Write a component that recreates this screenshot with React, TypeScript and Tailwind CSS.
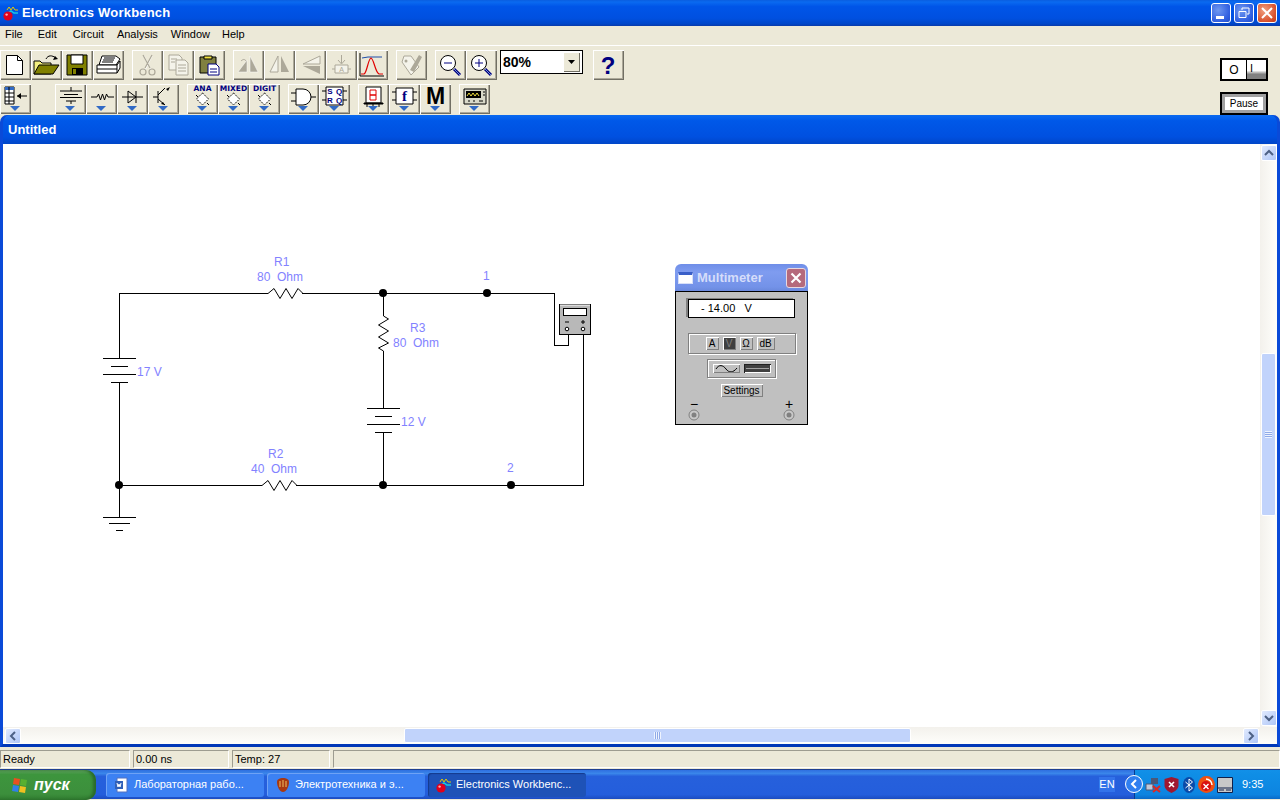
import type { ReactNode } from "react";

const ink = "#000";
const dim = "#aca899";

function Btn({ children, drop }: { children?: ReactNode; drop?: boolean }) {
  return (
    <div className="relative w-[31px] h-[30px] bg-[#ece9d8] shadow-[inset_1px_1px_0_#fff,inset_-1px_-1px_0_#716f64,inset_-2px_-2px_0_#aca899]">
      <svg width="31" height="30" viewBox="0 0 31 30" className="block">
        {children}
        {drop && <path d="M10 22h10l-5 5z" fill="#316ac5" />}
      </svg>
    </div>
  );
}

function Battery() {
  return <path d="M6 9h20M10 13h12M10 16h12M13 20h6M16 3v5M16 21v1" stroke={ink} strokeWidth="1" fill="none" />;
}

function Logo({ size = 16 }: { size?: number }) {
  return (
    <svg width={size} height={size} viewBox="0 0 16 16" className="block shrink-0">
      <path d="M4 5l2-3 2 3 2-3 2 3h3" stroke="#e8c800" fill="none" />
      <path d="M5 8l3-2 3 2h4" stroke="#19c8e0" strokeWidth="1.5" fill="none" />
      <circle cx="5" cy="11" r="4.6" fill="#e0001b" />
      <circle cx="3.6" cy="9.6" r="1.2" fill="#ffb0b0" />
    </svg>
  );
}

function Mag({ plus }: { plus?: boolean }) {
  return (
    <>
      <circle cx="13" cy="13" r="7.5" fill="#fff" stroke={ink} />
      <path d="M9 13h8" stroke="#000080" />
      {plus && <path d="M13 9v8" stroke="#000080" />}
      <path d="M19 19l6 6" stroke="#000080" strokeWidth="3" />
      <path d="M19 19l6 6" stroke="#6f8fd8" strokeWidth="1" />
    </>
  );
}

function Chip({ label }: { label: string }) {
  return (
    <>
      <text x="15.5" y="7" textAnchor="middle" fontSize="7.5" fill="#000080" fontWeight="700" fontFamily="'DejaVu Sans',sans-serif">{label}</text>
      <path d="M15.5 9l6 6-6 6-6-6z" fill="#fff" stroke={ink} strokeDasharray="1.5 1" />
      <path d="M9 11l2 2M20 19l2 2" stroke={ink} />
    </>
  );
}

function Row1() {
  return (
    <div className="flex">
      <div className="flex">
        <Btn><path d="M6.5 5.5h11l5 5v14h-16z" fill="#fff" stroke={ink} /><path d="M17.5 5.5v5h5" fill="none" stroke={ink} /></Btn>
        <Btn>
          <path d="M3 24V11h6l2 2h9v11z" fill="#f4f080" stroke={ink} />
          <path d="M3 24l5-9h20l-6 9z" fill="#808000" stroke={ink} />
          <path d="M15 9c2-4 6-4 10-1" fill="none" stroke={ink} /><path d="M27 9l-5 1 2-4z" fill={ink} />
        </Btn>
        <Btn>
          <path d="M5 5h20v20H5z" fill="#808000" stroke={ink} />
          <path d="M9 5h12v9H9z" fill="#fff" stroke={ink} />
          <path d="M10 18h11v7H10z" fill={ink} /><path d="M11 19h3v5h-3z" fill="#808000" />
        </Btn>
        <Btn>
          <path d="M9 6h14l4 3-4 6H6z" fill="#fff" stroke={ink} />
          <path d="M11 8h11M10 10h11M9 12h11" stroke={ink} />
          <path d="M4 15h20l3-4v7l-3 5H4z" fill="#fff" stroke={ink} />
          <path d="M4 19h20M24 15v8" stroke={ink} />
        </Btn>
      </div>
      <div className="flex ml-[8px]">
        <Btn>
          <g fill="none" stroke="#fff"><path d="M12 6l7 14M20 6l-7 14" /></g>
          <g fill="none" stroke={dim} strokeWidth="1.2">
            <path d="M11 5l7 13M20 5l-7 13" /><circle cx="11" cy="22" r="3" /><circle cx="20" cy="22" r="3" />
          </g>
        </Btn>
        <Btn>
          <path d="M6 5h10l3 3v12H6z" fill="#f4f3ea" stroke={dim} />
          <path d="M13 10h9l3 3v12H13z" fill="#f4f3ea" stroke={dim} />
          <path d="M15 15h8M15 18h8M15 21h8M8 9h6M8 12h4" stroke={dim} />
        </Btn>
        <Btn>
          <path d="M6 7h16v16H6z" fill="#808040" stroke={ink} />
          <path d="M10 6h8v3h-8z" fill="#f0e040" stroke={ink} />
          <path d="M14 14h8l3 3v8H14z" fill="#fff" stroke="#000080" />
          <path d="M16 19h7M16 22h7" stroke="#000080" />
        </Btn>
      </div>
      <div className="flex ml-[8px]">
        <Btn>
          <path d="M14 10L5 22h9zM17 6l8 16h-8z" fill={dim} stroke="#fff" strokeWidth="0.5" />
          <path d="M8 11c2-2 4-2 5 0" fill="none" stroke={dim} />
        </Btn>
        <Btn><path d="M14 6v16H6z" fill="#f4f3ea" stroke={dim} /><path d="M17 6v16h8z" fill={dim} /></Btn>
        <Btn><path d="M25 6v8H8z" fill="#f4f3ea" stroke={dim} /><path d="M25 16v8L8 16z" fill={dim} /></Btn>
        <Btn>
          <path d="M15.5 5v8M12 10l3.5 4 3.5-4M6 19h3M22 19h3" stroke={dim} fill="none" />
          <path d="M9 15h13v8H9z" fill="#f4f3ea" stroke={dim} />
          <text x="15.5" y="22" textAnchor="middle" fontSize="7" fill={dim}>A</text>
        </Btn>
        <Btn>
          <path d="M3 3v23h24" fill="none" stroke={ink} />
          <path d="M5 8l6-1h14" fill="none" stroke="#1c4ca8" />
          <path d="M4 24h3c3-1 4-15 7-16 3 1 4 14 8 16h4" fill="none" stroke="#e00000" strokeWidth="1.2" />
        </Btn>
      </div>
      <div className="ml-[8px]">
        <Btn>
          <path d="M6 12l9 13 8-8-8-11H8z" fill="#f4f3ea" stroke={dim} />
          <path d="M14 20l9-15 3 2-8 15z" fill={dim} />
          <circle cx="10" cy="11" r="1.5" fill={dim} />
        </Btn>
      </div>
      <div className="flex ml-[8px]">
        <Btn><Mag /></Btn>
        <Btn><Mag plus /></Btn>
      </div>
      <div className="ml-[3px] w-[83px] h-[24px] border border-black bg-white flex items-center justify-between">
        <span className="pl-[2px] text-[14px] font-bold text-black leading-none font-['Liberation_Sans',sans-serif]">80%</span>
        <div className="w-[17px] h-[20px] mr-[2px] flex items-center justify-center bg-[#ece9d8] shadow-[inset_1px_1px_0_#fff,inset_-1px_-1px_0_#716f64]">
          <svg width="7" height="4" viewBox="0 0 7 4"><path d="M0 0h7L3.5 4z" fill="#000" /></svg>
        </div>
      </div>
      <div className="ml-[10px]">
        <Btn>
          <text x="15" y="24" textAnchor="middle" fontSize="24" fontWeight="700" fill="#000080" fontFamily="'Liberation Sans',sans-serif">?</text>
        </Btn>
      </div>
    </div>
  );
}

function Row2() {
  return (
    <div className="flex mt-[4px]">
      <Btn drop>
        <path d="M5 3h9v17H5z" fill="#fff" stroke={ink} /><path d="M5 3h9v3H5z" fill="#316ac5" />
        <path d="M5 9h9M5 13h9M5 17h9M9 3v17" stroke={ink} />
        <path d="M17 12h10" stroke={ink} /><path d="M17 12l4-3v6z" fill={ink} />
      </Btn>
      <div className="flex ml-[24px]">
        <Btn drop><path d="M5 7h22M9 10.500h14M5 13.500h22M11 17h10M16 3v4M16 17v3" stroke={ink} fill="none" /></Btn>
        <Btn drop><path d="M5 13h6l1.500-3 2 6 2-6 2 6 2-6 1.500 3h6" stroke={ink} fill="none" /></Btn>
        <Btn drop><path d="M5 13h21M11 7l8 6-8 6zM19 7v12" stroke={ink} fill="none" /></Btn>
        <Btn drop>
          <path d="M10 7v12M5 13h5M10 11l7-7M10 15l7 6" stroke={ink} fill="none" />
          <path d="M17 21l-4-1 2-2zM22 3l-4 2 2 2z" fill={ink} />
        </Btn>
      </div>
      <div className="flex ml-[8px]">
        <Btn drop><Chip label="ANA" /></Btn>
        <Btn drop><Chip label="MIXED" /></Btn>
        <Btn drop><Chip label="DIGIT" /></Btn>
      </div>
      <div className="flex ml-[8px]">
        <Btn drop><path d="M8 5h7a8 8 0 010 16H8zM3 9h5M3 17h5M23 13h5" fill="#fff" stroke={ink} /></Btn>
        <Btn drop>
          <path d="M7 3h17v18H7zM3 7h4M3 16h4M24 7h4M24 16h4" fill="#fff" stroke={ink} />
          <text x="11" y="10" textAnchor="middle" fontSize="8" fontWeight="700" fill="#000080">S</text>
          <text x="20" y="10" textAnchor="middle" fontSize="8" fontWeight="700" fill="#000080">Q</text>
          <text x="11" y="19" textAnchor="middle" fontSize="8" fontWeight="700" fill="#000080">R</text>
          <text x="20" y="19" textAnchor="middle" fontSize="8" fontWeight="700" fill="#000080">Q</text>
        </Btn>
      </div>
      <div className="flex ml-[8px]">
        <Btn drop>
          <path d="M8 3h15v16H8z" fill="#fff" stroke={ink} />
          <path d="M12 6h6v5h-6zM12 11h6v5h-6z" fill="none" stroke="#e00000" />
          <path d="M6 19h19v1H6zM9 20v3M15 20v3M21 20v3" stroke={ink} />
        </Btn>
        <Btn drop>
          <path d="M7 4h17v16H7zM3 8h4M3 16h4M24 8h4M24 16h4" fill="#fff" stroke={ink} />
          <text x="15.5" y="17" textAnchor="middle" fontSize="15" fontWeight="700" fontFamily="'Liberation Serif',serif" fill="#000080">f</text>
        </Btn>
        <Btn drop>
          <text x="15.5" y="20" textAnchor="middle" fontSize="23" fontWeight="700" fill="#000" fontFamily="'Liberation Sans',sans-serif">M</text>
        </Btn>
      </div>
      <div className="ml-[8px]">
        <Btn drop>
          <path d="M5 5h22v15H5z" fill="#d8d8c8" stroke={ink} />
          <path d="M7 7h15v7H7z" fill="#000" />
          <path d="M8 12l2-3 2 3 2-3 2 3 2-3 2 3" stroke="#f0e040" fill="none" />
          <path d="M24 8h2M24 11h2M9 17h2M14 17h2M20 17h4" stroke={ink} />
        </Btn>
      </div>
    </div>
  );
}

function Circuit() {
  const label = "fill-[#8282ff] text-[12px] whitespace-pre font-['Liberation_Sans',sans-serif]";
  return (
    <svg width="1257" height="582" viewBox="3 145 1257 582" className="block">
      <g fill="none" stroke="#000" strokeWidth="1.200" shapeRendering="crispEdges">
        <path d="M119.500 359V294.500H266M302 294.500H554.500V346.500H568.500V336" />
        <path d="M383.500 294.500V317M383.500 352V409M383.500 433V486.500" />
        <path d="M119.500 383V518M119.500 486.500H260M296 486.500H583.500V336" />
        <path d="M103 359.500h33M111 367.500h17M103 375.500h33M111 383.500h17" />
        <path d="M367 409.500h33M375 417.500h17M367 425.500h33M375 433.500h17" />
        <path d="M103 518.500h33M109 524.500h21M116 531.500h7" />
      </g>
      <g fill="none" stroke="#000" strokeWidth="1">
        <path d="M266 294.500h2l6-5 6 10 6-10 6 10 6-10 5 5h3" />
        <path d="M260 486.500h2l6-5 6 10 6-10 6 10 6-10 5 5h3" />
        <path d="M383.500 317l5 3-10 6 10 6-10 6 10 6-10 5 5 3" />
      </g>
      <g fill="#000">
        <circle cx="383" cy="294" r="4" /><circle cx="487" cy="294" r="4" />
        <circle cx="119" cy="486" r="4" /><circle cx="383" cy="486" r="4" /><circle cx="511" cy="486" r="4" />
      </g>
      <rect x="559.500" y="305.500" width="31" height="30" fill="#b8b8b8" stroke="#000" />
      <path d="M560 306h30" stroke="#fff" />
      <rect x="563.500" y="309.500" width="23" height="7" fill="#fff" stroke="#000" />
      <path d="M565 323h4M581 323h4M583 321v4" stroke="#000" />
      <circle cx="567" cy="330" r="1.800" fill="#fff" stroke="#000" />
      <circle cx="583" cy="330" r="1.800" fill="#fff" stroke="#000" />
      <text x="274" y="267" className={label}>R1</text>
      <text x="257" y="282" className={label}>80  Ohm</text>
      <text x="268" y="459" className={label}>R2</text>
      <text x="251" y="474" className={label}>40  Ohm</text>
      <text x="410" y="333" className={label}>R3</text>
      <text x="393" y="348" className={label}>80  Ohm</text>
      <text x="137" y="377" className={label}>17 V</text>
      <text x="401" y="427" className={label}>12 V</text>
      <text x="483" y="281" className={label}>1</text>
      <text x="507" y="473" className={label}>2</text>
    </svg>
  );
}

function ModeKey({ children, on, wide }: { children: ReactNode; on?: boolean; wide?: boolean }) {
  return (
    <div
      className={`${wide ? "w-[18px]" : "w-[13px]"} h-[13px] flex items-center justify-center text-[10px] leading-none ${
        on ? "bg-[#404040] text-[#808080]" : "bg-[#c0c0c0] text-black"
      } shadow-[inset_1px_1px_0_#fff,inset_-1px_-1px_0_#808080]`}
    >
      {children}
    </div>
  );
}

function Terminal({ sign }: { sign: string }) {
  return (
    <div className="flex flex-col items-center w-[12px]">
      <span className="text-[14px] leading-[10px] h-[10px] text-black">{sign}</span>
      <svg width="12" height="12" viewBox="0 0 12 12" className="block">
        <circle cx="6" cy="6" r="5" fill="#c8c8c8" stroke="#808080" />
        <circle cx="6" cy="6" r="2.500" fill="#808080" />
      </svg>
    </div>
  );
}

function Multimeter() {
  return (
    <div className="absolute left-[672px] top-[120px] w-[133px] font-['Liberation_Sans',sans-serif]">
      <div className="h-[27px] rounded-t-[6px] bg-[linear-gradient(#6f8ee8,#7f9cf0_30%,#7392e8_85%,#6a88dd)] flex items-center pl-[3px]">
        <div className="w-[15px] h-[12px] bg-white border-t-[3px] border-t-[#3a5fc8] border border-[#d8e0f8]" />
        <span className="ml-[4px] text-[13px] font-bold text-[#d5ddfa]">Multimeter</span>
        <div className="ml-auto mr-[2px] w-[20px] h-[20px] rounded-[3px] border border-[#e8d8e0] bg-[#b56a7c] flex items-center justify-center">
          <svg width="12" height="12" viewBox="0 0 12 12"><path d="M1.500 1.500l9 9M10.500 1.500l-9 9" stroke="#fff" strokeWidth="2.200" /></svg>
        </div>
      </div>
      <div className="h-[134px] border border-black bg-[#c0c0c0] flex flex-col items-center pt-[7px]">
        <div className="w-[107px] h-[19px] bg-white border border-black shadow-[-2px_-1px_0_#808080] flex items-center pl-[12px] text-[11px] text-black whitespace-pre">
          - 14.00   V
        </div>
        <div className="mt-[15px] w-[108px] h-[21px] border border-[#808080] shadow-[1px_1px_0_#fff,inset_1px_1px_0_#fff] flex items-center pl-[17px] gap-[4px]">
          <ModeKey>A</ModeKey>
          <ModeKey on>V</ModeKey>
          <ModeKey>Ω</ModeKey>
          <ModeKey wide>dB</ModeKey>
        </div>
        <div className="mt-[5px] w-[69px] h-[19px] border border-[#808080] shadow-[1px_1px_0_#fff,inset_1px_1px_0_#fff] flex items-center justify-center gap-[4px]">
          <div className="w-[27px] h-[9px] bg-[#c0c0c0] shadow-[inset_1px_1px_0_#fff,inset_-1px_-1px_0_#808080] flex items-center justify-center">
            <svg width="23" height="7" viewBox="0 0 23 7"><path d="M1 4c3-5 7-4 10 0s7 4 11-1" fill="none" stroke="#000" /></svg>
          </div>
          <div className="w-[27px] h-[9px] bg-[#404040] shadow-[inset_1px_1px_0_#202020,inset_-1px_-1px_0_#fff] flex items-center justify-center">
            <div className="w-[23px] h-px bg-[#a0a0a0]" />
          </div>
        </div>
        <div className="mt-[6px] w-[42px] h-[13px] flex items-center justify-center text-[10px] leading-none text-black bg-[#c0c0c0] shadow-[inset_1px_1px_0_#fff,inset_-1px_-1px_0_#808080]">
          Settings
        </div>
        <div className="mt-[2px] w-full px-[12px] flex justify-between">
          <Terminal sign="−" />
          <Terminal sign="+" />
        </div>
      </div>
    </div>
  );
}

function ScrollArrow({ d }: { d: string }) {
  return (
    <div className="w-[16px] h-[16px] shrink-0 rounded-[2px] border border-white bg-[linear-gradient(135deg,#e1eafe,#aec6f7)] flex items-center justify-center">
      <svg width="10" height="10" viewBox="0 0 10 10"><path d={d} fill="none" stroke="#4d6185" strokeWidth="2" /></svg>
    </div>
  );
}

function WinBtn({ children, close }: { children: ReactNode; close?: boolean }) {
  return (
    <div
      className={`w-[20px] h-[20px] rounded-[3px] border border-white flex items-center justify-center ${
        close ? "bg-[radial-gradient(circle_at_35%_35%,#f0a080,#d8502c_70%,#c03c1c)]" : "bg-[radial-gradient(circle_at_35%_35%,#6f98f0,#2f5ee0_70%,#2450c8)]"
      }`}
    >
      {children}
    </div>
  );
}

function StatusCell({ w, children }: { w: string; children?: ReactNode }) {
  return (
    <div className={`${w} h-[18px] flex items-center pl-[2px] text-[11px] text-black border border-t-[#9d9c90] border-l-[#9d9c90] border-r-white border-b-white`}>
      {children}
    </div>
  );
}

function Task({ icon, text, active }: { icon: ReactNode; text: string; active?: boolean }) {
  return (
    <div
      className={`w-[158px] h-[24px] rounded-[3px] flex items-center pl-[8px] gap-[4px] text-[11px] text-white ${
        active ? "bg-[#1e52b7] shadow-[inset_1px_1px_1px_#143a8c]" : "bg-[#3c81f3] shadow-[inset_1px_1px_0_#6ea2f6]"
      }`}
    >
      {icon}
      <span className="truncate">{text}</span>
    </div>
  );
}

export default function App() {
  return (
    <div className="w-[1280px] h-[800px] overflow-hidden flex flex-col bg-[#ece9d8] font-['Liberation_Sans',sans-serif]">
      {/* main title bar */}
      <div className="h-[26px] shrink-0 flex items-center pl-[3px] pr-[3px] bg-[linear-gradient(#0a5ee0,#0a6af0_8%,#0055e8_25%,#0050e0_70%,#0046c8_92%,#0a3aa8)]">
        <Logo />
        <span className="ml-[3px] text-[13px] font-bold text-white tracking-[0.2px]">Electronics Workbench</span>
        <div className="ml-auto flex gap-[3px]">
          <WinBtn><div className="w-[8px] h-[3px] bg-white mt-[8px] mr-[3px]" /></WinBtn>
          <WinBtn>
            <svg width="12" height="12" viewBox="0 0 12 12"><path d="M4 3V1h7v6H9M1 4.500h7v6H1z" fill="none" stroke="#fff" /></svg>
          </WinBtn>
          <WinBtn close>
            <svg width="12" height="12" viewBox="0 0 12 12"><path d="M1 1l10 10M11 1L1 11" stroke="#fff" strokeWidth="2" /></svg>
          </WinBtn>
        </div>
      </div>

      {/* menu */}
      <div className="h-[20px] shrink-0 flex items-center pb-[2px] text-[11px] text-black border-b border-b-[#aebbd0]">
        <span className="ml-[5px]">File</span>
        <span className="ml-[15px]">Edit</span>
        <span className="ml-[16px]">Circuit</span>
        <span className="ml-[13px]">Analysis</span>
        <span className="ml-[13px]">Window</span>
        <span className="ml-[12px]">Help</span>
      </div>

      {/* toolbars */}
      <div className="h-[70px] shrink-0 flex justify-between pt-[4px] border-t border-t-white -mt-px">
        <div className="flex flex-col">
          <Row1 />
          <Row2 />
        </div>
        <div className="mr-[12px] flex flex-col pt-[8px] gap-[11px]">
          <div className="w-[48px] h-[23px] border-2 border-black bg-white flex items-center">
            <span className="w-[24px] text-center text-[12px] leading-none text-black">O</span>
            <div className="w-[20px] h-[19px] bg-[linear-gradient(#fff_55%,#808080_75%)] border-l border-black text-[11px] leading-[16px] pl-[3px] text-black">I</div>
          </div>
          <div className="w-[48px] h-[23px] border-2 border-black bg-white flex items-center justify-center shadow-[inset_0_0_0_3px_#a0a0a0] text-[10px] text-black">
            Pause
          </div>
        </div>
      </div>

      {/* document window */}
      <div className="h-[632px] shrink-0 flex flex-col rounded-t-[7px] bg-[#0046d8] border-x-[3px] border-b-[3px] border-x-[#0a4ad8] border-b-[#0038b8] relative">
        <div className="h-[29px] shrink-0 flex items-center pl-[5px] rounded-t-[7px] bg-[linear-gradient(#0a6af0,#0058e8_20%,#0050e0_75%,#0046c8)] text-[13px] font-bold text-white">
          Untitled
        </div>
        <div className="flex-1 min-h-0 flex bg-white">
          <div className="relative flex-1 min-w-0 overflow-hidden">
            <Circuit />
            <Multimeter />
          </div>
          <div className="w-[17px] shrink-0 flex flex-col items-center py-px bg-[linear-gradient(90deg,#f3f1ec,#fefefb)]">
            <ScrollArrow d="M1 7l4-4 4 4" />
            <div className="mt-[192px] w-[15px] h-[163px] rounded-[2px] border border-white bg-[#c1d3fb] flex items-center justify-center">
              <div className="w-[7px] h-[7px] bg-[repeating-linear-gradient(#eef3fe_0,#eef3fe_1px,#8faae8_1px,#8faae8_2px)]" />
            </div>
            <div className="mt-auto">
              <ScrollArrow d="M1 3l4 4 4-4" />
            </div>
          </div>
        </div>
        <div className="h-[17px] shrink-0 flex items-center bg-[linear-gradient(#f3f1ec,#fefefb)]">
          <div className="ml-[2px]">
            <ScrollArrow d="M7 1L3 5l4 4" />
          </div>
          <div className="ml-[383px] w-[507px] h-[15px] rounded-[2px] border border-white bg-[#c1d3fb] flex items-center justify-center">
            <div className="w-[7px] h-[7px] bg-[repeating-linear-gradient(90deg,#eef3fe_0,#eef3fe_1px,#8faae8_1px,#8faae8_2px)]" />
          </div>
          <div className="ml-auto mr-[18px]">
            <ScrollArrow d="M3 1l4 4-4 4" />
          </div>
        </div>
      </div>

      {/* status bar */}
      <div className="h-[22px] shrink-0 flex items-end gap-[3px] pb-px">
        <StatusCell w="w-[130px]">Ready</StatusCell>
        <StatusCell w="w-[96px]">0.00 ns</StatusCell>
        <StatusCell w="w-[98px]">Temp:  27</StatusCell>
        <StatusCell w="flex-1" />
      </div>

      {/* taskbar */}
      <div className="h-[30px] shrink-0 flex items-center bg-[linear-gradient(#2f6fe0,#3a86ea_12%,#2660dc_22%,#245edc_85%,#1c4cc0)] border-t border-t-[#1f3f90]">
        <div className="w-[96px] h-[30px] rounded-r-[10px] bg-[linear-gradient(#5fa05f,#3d953d_15%,#3c8f3c_80%,#2f7a2f)] flex items-center pl-[10px] gap-[4px] shadow-[inset_-3px_0_3px_#2a6a2a]">
          <svg width="20" height="20" viewBox="0 0 20 20">
            <path d="M4 3l6 1-1 6-6-1z" fill="#e85020" />
            <path d="M11 4l6 1-1 6-6-1z" fill="#58b030" />
            <path d="M3 10l6 1-1 6-6-1z" fill="#3080e8" />
            <path d="M10 11l6 1-1 6-6-1z" fill="#f0c020" />
          </svg>
          <span className="text-[16px] font-bold italic text-white">пуск</span>
        </div>
        <div className="ml-[10px] flex gap-[3px]">
          <Task
            text="Лабораторная рабо..."
            icon={
              <svg width="16" height="16" viewBox="0 0 16 16" className="shrink-0">
                <path d="M3 1h10v14H3z" fill="#fff" stroke="#5070c0" />
                <path d="M1 4h8v8H1z" fill="#3060b8" />
                <path d="M3 6l1 4 1-3 1 3 1-4" stroke="#fff" fill="none" />
              </svg>
            }
          />
          <Task
            text="Электротехника и э..."
            icon={
              <svg width="16" height="16" viewBox="0 0 16 16" className="shrink-0">
                <path d="M2 5c0-3 3-4 6-4s6 1 6 4c0 5-3 10-6 10S2 10 2 5z" fill="#a83810" />
                <path d="M5 4v6M8 3v7M11 4v6" stroke="#f0c060" />
              </svg>
            }
          />
          <Task active text="Electronics Workbenc..." icon={<Logo />} />
        </div>
        <div className="ml-[513px] w-[16px] h-[15px] bg-[#3c81f3]/60 flex items-center justify-center text-[11px] text-white">EN</div>
        <div className="ml-auto w-[146px] h-[29px] flex items-center bg-[linear-gradient(#1290e8,#0f8ee6_15%,#0d84e0_85%,#0a6ac8)] border-l border-l-[#0a3a90] relative">
          <div className="absolute left-[-10px] top-[5px] w-[18px] h-[18px] rounded-full border border-white bg-[#2f7ff0] flex items-center justify-center">
            <svg width="8" height="10" viewBox="0 0 8 10"><path d="M6 1L2 5l4 4" fill="none" stroke="#fff" strokeWidth="2" /></svg>
          </div>
          <svg width="16" height="16" viewBox="0 0 16 16" className="ml-[10px] shrink-0">
            <path d="M6 1h7v6H6z" fill="#4a5878" />
            <path d="M1 7h7v6H1z" fill="#c0c8d8" stroke="#4a5878" />
            <path d="M8 9l7 6M15 9l-7 6" stroke="#e02820" strokeWidth="2" />
          </svg>
          <svg width="15" height="16" viewBox="0 0 15 16" className="ml-[3px] shrink-0">
            <path d="M7.500 0l7 2v6c0 4-3 6-7 8-4-2-7-4-7-8V2z" fill="#a01830" />
            <path d="M5 5l5 5M10 5l-5 5" stroke="#fff" strokeWidth="1.600" />
          </svg>
          <svg width="12" height="16" viewBox="0 0 12 16" className="ml-[4px] shrink-0">
            <ellipse cx="6" cy="8" rx="6" ry="8" fill="#0a4aa8" />
            <path d="M2.500 5l7 6-3.500 3V2l3.500 3-7 6" fill="none" stroke="#fff" />
          </svg>
          <svg width="17" height="17" viewBox="0 0 17 17" className="ml-[3px] shrink-0">
            <circle cx="8.500" cy="8.500" r="8.500" fill="#f05010" />
            <circle cx="8" cy="10" r="5" fill="#d81010" />
            <path d="M5.500 8l5 5M10.500 8l-5 5" stroke="#fff" strokeWidth="1.400" />
            <path d="M8 3a6 6 0 016 6" fill="none" stroke="#fff" strokeWidth="1.500" />
          </svg>
          <svg width="16" height="16" viewBox="0 0 16 16" className="ml-[2px] shrink-0">
            <path d="M.5.500h15v15H.5z" fill="#c8c8c8" stroke="#10204a" />
            <path d="M.5 11h15M2 13h5M9 13h5" stroke="#10204a" />
          </svg>
          <span className="ml-[9px] text-[11px] text-white">9:35</span>
        </div>
      </div>
    </div>
  );
}
